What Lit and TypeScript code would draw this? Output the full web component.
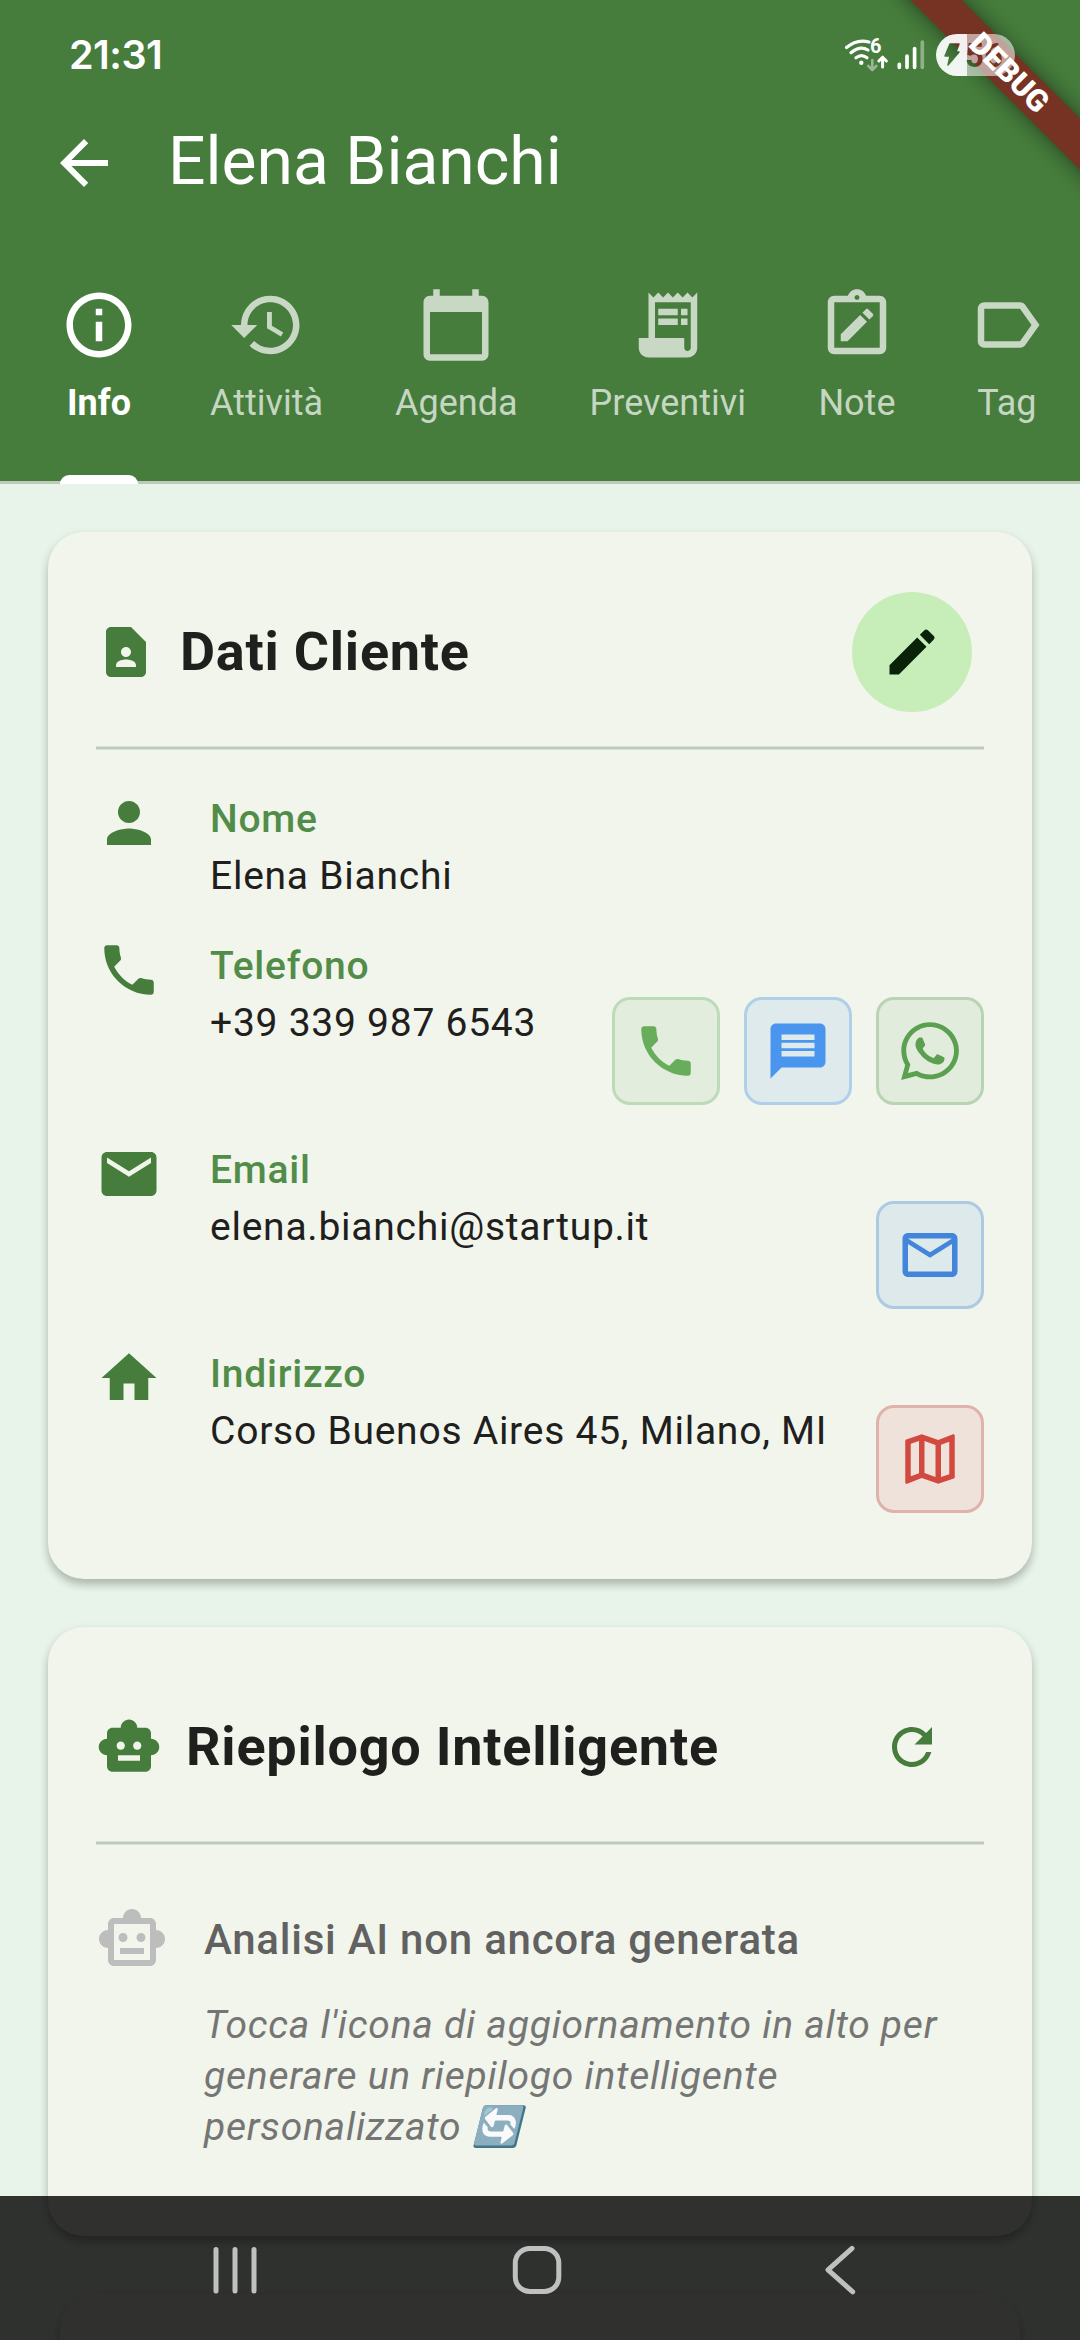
import { LitElement, html, css, svg, nothing, type TemplateResult } from 'lit';
import { customElement, property } from 'lit/decorators.js';
import { classMap } from 'lit/directives/class-map.js';

const ROBOT_SHELL =
  'M20 9V7c0-1.1-.9-2-2-2h-3c0-1.66-1.34-3-3-3S9 3.34 9 5H6c-1.1 0-2 .9-2 2v2c-1.66 0-3 1.34-3 3s1.34 3 3 3v4c0 1.1.9 2 2 2h12c1.1 0 2-.9 2-2v-4c1.66 0 3-1.34 3-3s-1.34-3-3-3z';

const ICONS: Record<string, string> = {
  back: 'M20 11H7.83l5.59-5.59L12 4l-8 8 8 8 1.41-1.41L7.83 13H20v-2z',
  info: 'M11 7h2v2h-2zm0 4h2v6h-2zm1-9C6.48 2 2 6.48 2 12s4.48 10 10 10 10-4.48 10-10S17.52 2 12 2zm0 18c-4.41 0-8-3.59-8-8s3.59-8 8-8 8 3.59 8 8-3.59 8-8 8z',
  history:
    'M13 3c-4.97 0-9 4.03-9 9H1l3.89 3.89.07.14L9 12H6c0-3.87 3.13-7 7-7s7 3.13 7 7-3.13 7-7 7c-1.93 0-3.68-.79-4.94-2.06l-1.42 1.42C8.27 19.99 10.51 21 13 21c4.97 0 9-4.03 9-9s-4.03-9-9-9zm-1 5v5l4.28 2.54.72-1.21-3.5-2.08V8H12z',
  calendar:
    'M20 3h-1V1h-2v2H7V1H5v2H4c-1.1 0-2 .9-2 2v16c0 1.1.9 2 2 2h16c1.1 0 2-.9 2-2V5c0-1.1-.9-2-2-2zm0 18H4V8h16v13z',
  receipt:
    'M19.5 3.5L18 2l-1.5 1.5L15 2l-1.5 1.5L12 2l-1.5 1.5L9 2 7.5 3.5 6 2v14H3v3c0 1.66 1.34 3 3 3h12c1.66 0 3-1.34 3-3V2l-1.5 1.5zM19 19c0 .55-.45 1-1 1s-1-.45-1-1v-3H8V5h11v14zM9 7h6v2H9zM16 7h2v2h-2zM9 10h6v2H9zM16 10h2v2h-2z',
  note: 'M19 3h-4.18C14.4 1.84 13.3 1 12 1s-2.4.84-2.82 2H5c-1.1 0-2 .9-2 2v14c0 1.1.9 2 2 2h14c1.1 0 2-.9 2-2V5c0-1.1-.9-2-2-2zm-7-.25c.41 0 .75.34.75.75s-.34.75-.75.75-.75-.34-.75-.75.34-.75.75-.75zM19 19H5V5h14v14zM15.08 11.03L12.96 8.91 7 14.86V17h2.1zM16.85 9.27c.2-.2.2-.51 0-.71l-1.41-1.41c-.2-.2-.51-.2-.71 0l-1.06 1.06 2.12 2.12 1.06-1.06z',
  tag: 'M17.63 5.84C17.27 5.33 16.67 5 16 5L5 5.01C3.9 5.01 3 5.9 3 7v10c0 1.1.9 1.99 2 1.99L16 19c.67 0 1.27-.33 1.63-.84L22 12l-4.37-6.16zM16 17H5V7h11l3.55 5L16 17z',
  contact:
    'M14 2H6c-1.1 0-2 .9-2 2v16c0 1.1.9 2 2 2h12c1.1 0 2-.9 2-2V8l-6-6zm-2 8c1.1 0 2 .9 2 2s-.9 2-2 2-2-.9-2-2 .9-2 2-2zm4 8H8v-.57c0-.81.48-1.53 1.22-1.85.85-.37 1.79-.58 2.78-.58s1.93.21 2.78.58c.74.32 1.22 1.04 1.22 1.85V18z',
  edit: 'M3 17.25V21h3.75L17.81 9.94l-3.75-3.75L3 17.25zM20.71 7.04c.39-.39.39-1.02 0-1.41l-2.34-2.34c-.39-.39-1.02-.39-1.41 0l-1.83 1.83 3.75 3.75 1.83-1.83z',
  person:
    'M12 12c2.21 0 4-1.79 4-4s-1.79-4-4-4-4 1.79-4 4 1.79 4 4 4zm0 2c-2.67 0-8 1.34-8 4v2h16v-2c0-2.66-5.33-4-8-4z',
  phone:
    'M6.62 10.79c1.44 2.83 3.76 5.14 6.59 6.59l2.2-2.2c.27-.27.67-.36 1.02-.24 1.12.37 2.33.57 3.57.57.55 0 1 .45 1 1V20c0 .55-.45 1-1 1-9.39 0-17-7.61-17-17 0-.55.45-1 1-1h3.5c.55 0 1 .45 1 1 0 1.25.2 2.45.57 3.57.11.35.03.74-.25 1.02l-2.2 2.2z',
  mail: 'M20 4H4c-1.1 0-1.99.9-1.99 2L2 18c0 1.1.9 2 2 2h16c1.1 0 2-.9 2-2V6c0-1.1-.9-2-2-2zm0 4l-8 5-8-5V6l8 5 8-5v2z',
  home: 'M10 20v-6h4v6h5v-8h3L12 3 2 12h3v8z',
  message:
    'M20 2H4c-1.1 0-1.99.9-1.99 2L2 22l4-4h14c1.1 0 2-.9 2-2V4c0-1.1-.9-2-2-2zm-2 12H6v-2h12v2zm0-3H6V9h12v2zm0-3H6V6h12v2z',
  mailOutline:
    'M22 6c0-1.1-.9-2-2-2H4c-1.1 0-2 .9-2 2v12c0 1.1.9 2 2 2h16c1.1 0 2-.9 2-2V6zm-2 0l-8 5-8-5h16zm0 12H4V8l8 5 8-5v10z',
  map: 'M20.5 3l-.16.03L15 5.1 9 3 3.36 4.9c-.21.07-.36.25-.36.48V20.5c0 .28.22.5.5.5l.16-.03L9 18.9l6 2.1 5.64-1.9c.21-.07.36-.25.36-.48V3.5c0-.28-.22-.5-.5-.5zM10 5.47l4 1.4v11.66l-4-1.4V5.47zm-5 .99l3-1.01v11.7l-3 1.16V6.46zm14 11.08l-3 1.01V6.86l3-1.16v11.84z',
  robot:
    ROBOT_SHELL +
    'M7.5 11.5c0-.83.67-1.5 1.5-1.5s1.5.67 1.5 1.5S9.83 13 9 13s-1.5-.67-1.5-1.5zM16 17H8v-2h8v2zm-1-4c-.83 0-1.5-.67-1.5-1.5S14.17 10 15 10s1.5.67 1.5 1.5S15.83 13 15 13z',
  robotOutline:
    ROBOT_SHELL +
    'M18 19H6V7h12v12zm-9-6c.83 0 1.5-.67 1.5-1.5S9.83 10 9 10s-1.5.67-1.5 1.5S8.17 13 9 13zm7.5-1.5c0-.83-.67-1.5-1.5-1.5s-1.5.67-1.5 1.5.67 1.5 1.5 1.5 1.5-.67 1.5-1.5zM8 15h8v2H8v-2z',
  refresh:
    'M17.65 6.35C16.2 4.9 14.21 4 12 4c-4.42 0-7.99 3.58-7.99 8s3.57 8 7.99 8c3.73 0 6.84-2.55 7.73-6h-2.08c-.82 2.33-3.04 4-5.65 4-3.31 0-6-2.69-6-6s2.69-6 6-6c1.66 0 3.14.69 4.22 1.78L13 11h7V4l-2.35 2.35z',
  whatsapp:
    'M380.9 97.1C339 55.1 283.2 32 223.9 32c-122.4 0-222 99.6-222 222 0 39.1 10.2 77.3 29.6 111L0 480l117.7-30.9c32.4 17.7 68.9 27 106.1 27h.1c122.3 0 224.1-99.6 224.1-222 0-59.3-25.2-115-67.1-157zm-157 341.6c-33.2 0-65.7-8.9-94-25.7l-6.7-4-69.8 18.3L72 359.2l-4.4-7c-18.5-29.4-28.2-63.3-28.2-98.2 0-101.7 82.8-184.5 184.6-184.5 49.3 0 95.6 19.2 130.4 54.1 34.8 34.9 56.2 81.2 56.1 130.5 0 101.8-84.9 184.6-186.6 184.6zm101.2-138.2c-5.5-2.8-32.8-16.2-37.9-18-5.1-1.9-8.8-2.8-12.5 2.8-3.7 5.6-14.3 18-17.6 21.8-3.2 3.7-6.5 4.2-12 1.4-32.6-16.3-54-29.1-75.5-66-5.7-9.8 5.7-9.1 16.3-30.3 1.8-3.7.9-6.9-.5-9.7-1.4-2.8-12.5-30.1-17.1-41.2-4.5-10.8-9.1-9.3-12.5-9.5-3.2-.2-6.9-.2-10.6-.2-3.7 0-9.7 1.4-14.8 6.9-5.1 5.6-19.4 19-19.4 46.3 0 27.3 19.9 53.7 22.6 57.4 2.8 3.7 39.1 59.7 94.8 83.8 35.2 15.2 49 16.5 66.6 13.9 10.7-1.6 32.8-13.4 37.4-26.4 4.6-13 4.6-24.1 3.2-26.4-1.3-2.5-5-3.9-10.5-6.6z',
};

@customElement('app-icon')
class AppIcon extends LitElement {
  @property() name = '';
  static styles = css`
    :host { display: block; flex: none; width: 66px; height: 66px; }
    .glyph { display: block; width: 100%; height: 100%; fill: currentColor; fill-rule: evenodd; }
  `;
  render() {
    const box = this.name === 'whatsapp' ? '-32 0 512 512' : '0 0 24 24';
    return html`<svg class="glyph" viewBox=${box}>${svg`<path d=${ICONS[this.name] ?? ''}></path>`}</svg>`;
  }
}

@customElement('status-bar')
class StatusBar extends LitElement {
  static styles = css`
    :host { display: flex; justify-content: space-between; align-items: center; height: 108px; padding: 0 60px 0 69px; box-sizing: border-box; }
    .clock { font: 600 39.500px/46px Inter, Roboto, sans-serif; letter-spacing: -0.5px; padding-top: 2px; }
    .system { display: block; width: 176px; height: 50px; margin-top: 2px; }
    .digits { font: 700 33px Roboto, sans-serif; }
    .gen { font: 700 20px Roboto, sans-serif; }
  `;
  render() {
    return html`
      <span class="clock">21:31</span>
      <svg class="system" viewBox="844 30 176 50" fill="none" stroke="#fff" stroke-linecap="round">
        <mask id="cut">
          <rect x="930" y="30" width="90" height="50" fill="#fff" stroke="none"></rect>
          <path d="M950 44h9l-3 8h3l-11 13 2-9h-5z" fill="#000" stroke="#000" stroke-width="1.5" stroke-linejoin="round"></path>
          <text class="digits" x="965" y="66.5" fill="#000" stroke="none">56</text>
        </mask>
        <path stroke-width="3.2" d="M846.5 47.5Q857 38.5 869 42M851 52.8Q860 45.200 868 50M856 57.800Q861.500 53.500 867 57.800"></path>
        <circle cx="861.3" cy="62.700" r="2.2" fill="#fff" stroke="none"></circle>
        <text class="gen" x="870" y="53.300" fill="#fff" stroke="none">6</text>
        <path stroke-width="2.6" stroke-linejoin="round" opacity=".45" d="M872.300 60v9.500M868.300 66l4 4 4-4"></path>
        <path stroke-width="3" stroke-linejoin="round" d="M882.600 67v-9.500M878.800 61l3.800-3.800 3.800 3.800"></path>
        <path stroke-width="3.700" d="M899.300 64.300v3M907 56v11.300M914.600 48.500v18.800"></path>
        <path stroke-width="3.700" opacity=".4" d="M922.300 42v25.300"></path>
        <g mask="url(#cut)" stroke="none" fill="#fff">
          <path fill-opacity=".93" d="M957 34h10v42h-10a21 21 0 0 1 0-42z"></path>
          <path fill-opacity=".55" d="M967 34h27a21 21 0 0 1 0 42h-27z"></path>
        </g>
      </svg>
    `;
  }
}

interface Action { icon: string; tone: string }
interface Field { icon: string; label: string; value: string; actions: Action[] }

const TABS = [
  { icon: 'info', label: 'Info' },
  { icon: 'history', label: 'Attività' },
  { icon: 'calendar', label: 'Agenda' },
  { icon: 'receipt', label: 'Preventivi' },
  { icon: 'note', label: 'Note' },
  { icon: 'tag', label: 'Tag' },
];

const FIELDS: Field[] = [
  { icon: 'person', label: 'Nome', value: 'Elena Bianchi', actions: [] },
  {
    icon: 'phone', label: 'Telefono', value: '+39 339 987 6543',
    actions: [{ icon: 'phone', tone: 'call' }, { icon: 'message', tone: 'sms' }, { icon: 'whatsapp', tone: 'chat' }],
  },
  { icon: 'mail', label: 'Email', value: 'elena.bianchi@startup.it', actions: [{ icon: 'mailOutline', tone: 'mail' }] },
  { icon: 'home', label: 'Indirizzo', value: 'Corso Buenos Aires 45, Milano, MI', actions: [{ icon: 'map', tone: 'map' }] },
];

@customElement('app-root')
class AppRoot extends LitElement {
  static styles = css`
    :host { display: block; font-family: Roboto, sans-serif; color: #1f201d; }
    .screen { position: relative; width: 1080px; height: 2340px; overflow: hidden; background: #e8f4e9; }

    .header { position: relative; overflow: hidden; height: 484px; background: #467c3c; color: #fff; }
    .header::after { content: ''; position: absolute; left: 0; right: 0; bottom: 0; height: 3px; background: #bfc9ba; }
    .debug {
      position: absolute; left: 808.500px; top: 54.500px; width: 400px; height: 36px; transform: rotate(45deg);
      background: #763323; box-shadow: 0 0 20px rgba(0, 0, 0, .5);
      font: 900 30.600px/36px Roboto, sans-serif; text-align: center;
    }
    .status { position: relative; }
    .toolbar { display: flex; align-items: center; gap: 48px; height: 110px; padding: 0 48px; }
    .toolbar app-icon { width: 72px; height: 72px; }
    .title { font-size: 66px; line-height: 78px; padding-bottom: 2px; }
    .tabs { display: flex; gap: 72px; padding: 68px 0 0 60px; height: 266px; box-sizing: border-box; }
    .tab {
      flex: none; display: flex; flex-direction: column; align-items: center; gap: 18px; min-width: 78px;
      font-size: 36px; line-height: 42px; color: rgba(255, 255, 255, .7);
    }
    .tab app-icon { width: 78px; height: 78px; }
    .selected { position: relative; z-index: 1; color: #fff; font-weight: 700; }
    .selected::after { content: ''; width: 100%; height: 9px; margin-top: auto; border-radius: 9px 9px 0 0; background: #fff; }

    .body { display: flex; flex-direction: column; padding: 48px; }
    .card {
      box-sizing: border-box; padding: 48px; border-radius: 36px; background: #f1f5eb;
      box-shadow: 0 6px 9px rgba(0, 0, 0, .2), 0 3px 12px rgba(0, 0, 0, .08);
    }
    .client { height: 1047px; }
    .summary { height: 609px; margin-top: 48px; }
    .next { height: 300px; margin: 58px 12px 0; }
    .card-head { display: flex; align-items: center; height: 144px; gap: 24px; color: #467c3c; }
    .card-head .lead { width: 60px; height: 60px; }
    .card-head .robot { width: 66px; height: 66px; }
    .card-title { flex: 1; margin: 0; font-size: 54px; font-weight: 700; letter-spacing: .75px; line-height: 64px; color: #1f201d; }
    .round { display: flex; align-items: center; justify-content: center; width: 120px; height: 120px; margin-right: 12px; border-radius: 50%; }
    .round app-icon { width: 60px; height: 60px; }
    .filled { background: #c7eeb9; color: #0a2207; }
    .rule { height: 4px; margin: 22px 0; background: linear-gradient(#d8dfd3 1px, #bfc9ba 1px 3px, #d8dfd3 3px); }

    .fields { display: flex; flex-direction: column; gap: 39px; padding-top: 21px; }
    .field { display: flex; gap: 48px; color: #467c3c; }
    .field > app-icon { margin-top: -3px; margin-bottom: -12px; }
    .detail { flex: 1; display: flex; flex-direction: column; gap: 4px; font-size: 39px; line-height: 53px; letter-spacing: .75px; white-space: nowrap; }
    .label { font-weight: 500; color: #528c49; }
    .line { display: flex; justify-content: space-between; align-items: flex-start; }
    .value { margin-bottom: -2px; color: #1f201d; }
    .actions { display: flex; gap: 24px; }
    .action {
      display: flex; align-items: center; justify-content: center; width: 108px; height: 108px;
      box-sizing: border-box; border: 3px solid; border-radius: 18px;
    }
    .call { background: #e2eddd; border-color: #bedbb9; }
    .call app-icon { color: #67ad5b; }
    .sms { background: #deeaec; border-color: #afd0e8; }
    .sms app-icon { color: #4a95ee; }
    .chat { background: #e1ecdc; border-color: #b9d4b5; }
    .chat app-icon { color: #5b9f50; }
    .mail { background: #dee9eb; border-color: #accae2; }
    .mail app-icon { color: #4285da; }
    .map { background: #eee2da; border-color: #e0b2ac; }
    .map app-icon { color: #d24a3f; }

    .empty { display: flex; gap: 36px; padding-top: 36px; letter-spacing: .75px; }
    .empty app-icon { width: 72px; height: 72px; color: #bdbdbd; }
    .empty-title { margin: 6px 0 30px; font-size: 42px; font-weight: 500; line-height: 61px; color: #616161; }
    .hint { margin: 0; font-size: 39px; font-style: italic; line-height: 51px; color: #757575; }

    .nav { position: absolute; left: 0; right: 0; bottom: 0; height: 144px; background: rgba(0, 0, 0, .8); }
    .nav-glyphs { display: block; width: 1080px; height: 144px; }
  `;

  private field(f: Field): TemplateResult {
    return html`
      <div class="field">
        <app-icon name=${f.icon}></app-icon>
        <div class="detail">
          <span class="label">${f.label}</span>
          <div class="line">
            <span class="value">${f.value}</span>
            ${f.actions.length
              ? html`<div class="actions">${f.actions.map((a) => html`<div class="action ${a.tone}"><app-icon name=${a.icon}></app-icon></div>`)}</div>`
              : nothing}
          </div>
        </div>
      </div>
    `;
  }

  render() {
    return html`
      <div class="screen">
        <header class="header">
          <div class="debug">DEBUG</div>
          <status-bar class="status"></status-bar>
          <div class="toolbar"><app-icon name="back"></app-icon><span class="title">Elena Bianchi</span></div>
          <nav class="tabs">
            ${TABS.map((t, i) => html`<div class=${classMap({ tab: true, selected: i === 0 })}><app-icon name=${t.icon}></app-icon><span>${t.label}</span></div>`)}
          </nav>
        </header>

        <main class="body">
          <section class="card client">
            <div class="card-head">
              <app-icon class="lead" name="contact"></app-icon>
              <h2 class="card-title">Dati Cliente</h2>
              <div class="round filled"><app-icon name="edit"></app-icon></div>
            </div>
            <div class="rule"></div>
            <div class="fields">${FIELDS.map((f) => this.field(f))}</div>
          </section>

          <section class="card summary">
            <div class="card-head">
              <app-icon class="robot" name="robot"></app-icon>
              <h2 class="card-title">Riepilogo Intelligente</h2>
              <div class="round"><app-icon name="refresh"></app-icon></div>
            </div>
            <div class="rule"></div>
            <div class="empty">
              <app-icon name="robotOutline"></app-icon>
              <div>
                <p class="empty-title">Analisi AI non ancora generata</p>
                <p class="hint">Tocca l'icona di aggiornamento in alto per generare un riepilogo intelligente personalizzato 🔄</p>
              </div>
            </div>
          </section>

          <section class="card next"></section>
        </main>

        <div class="nav">
          <svg class="nav-glyphs" viewBox="0 2196 1080 144" fill="none" stroke="#c0c0c0" stroke-width="5" stroke-linecap="round" stroke-linejoin="round">
            <path d="M216 2249.500v41.500M235 2249.500v41.500M254 2249.500v41.500"></path>
            <rect x="515.300" y="2248.500" width="43.500" height="43" rx="14.500"></rect>
            <path d="M852 2248.300L828 2269.800l24.700 22"></path>
          </svg>
        </div>
      </div>
    `;
  }
}
